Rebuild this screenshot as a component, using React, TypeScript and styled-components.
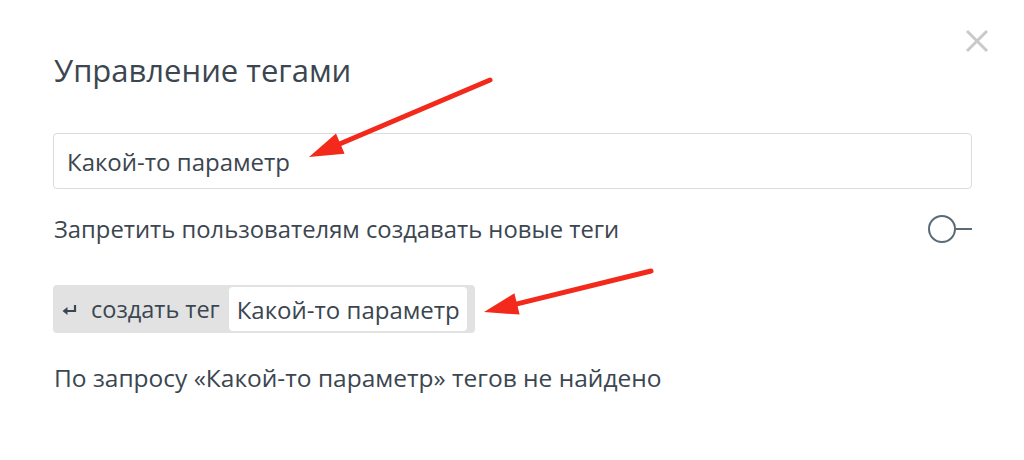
import React from "react";
import styled, { createGlobalStyle } from "styled-components";

const Global = createGlobalStyle`
  html, body { margin: 0; padding: 0; background: #fff; }
  body { font-family: "Open Sans", "Noto Sans", sans-serif; color: #3b4650; }
`;

const Modal = styled.div`
  position: relative;
  width: 1024px;
  height: 460px;
  box-sizing: border-box;
  padding: 48px 52px 0 53px;
  background: #fff;
  overflow: hidden;
`;

const Close = styled.button`
  position: absolute;
  top: 28px;
  right: 34px;
  width: 26px;
  height: 26px;
  border: none;
  background: transparent;
  padding: 0;
  cursor: pointer;
`;

const Title = styled.h2`
  margin: 0 0 0 1px;
  font-size: 31px;
  font-weight: 400;
  line-height: 44px;
  color: #3b4650;
`;

const Input = styled.input`
  display: block;
  width: 100%;
  box-sizing: border-box;
  height: 56px;
  margin-top: 41px;
  padding: 0 13px;
  border: 1px solid #dcdcdc;
  border-radius: 4px;
  font-family: inherit;
  font-size: 24px;
  color: #3b4650;
  outline: none;
`;

const Row = styled.div`
  display: flex;
  align-items: center;
  justify-content: space-between;
  margin-top: 22px;
  height: 36px;
`;

const Label = styled.span`
  font-size: 23.8px;
  color: #3b4650;
  padding-left: 1px;
`;

const Toggle = styled.div`
  display: flex;
  align-items: center;
`;

const Knob = styled.span`
  width: 28px;
  height: 28px;
  border: 2px solid #5b6b76;
  border-radius: 50%;
  box-sizing: border-box;
`;

const Tail = styled.span`
  width: 16px;
  height: 2px;
  background: #5b6b76;
`;

const Chip = styled.div`
  display: inline-flex;
  align-items: center;
  margin-top: 38px;
  height: 48px;
  padding: 2px 8px 2px 9px;
  box-sizing: border-box;
  background: #e2e2e2;
  border-radius: 4px;
`;

const ChipHint = styled.span`
  display: flex;
  align-items: center;
  gap: 14px;
  font-size: 23.5px;
  color: #3b4650;
  padding-right: 9px;
`;

const ChipValue = styled.span`
  display: flex;
  align-items: center;
  height: 44px;
  padding: 0 7px 0 8px;
  background: #fff;
  border-radius: 4px;
  font-size: 24px;
  color: #3b4650;
`;

const Empty = styled.p`
  margin: 28px 0 0 1px;
  font-size: 24.5px;
  color: #3b4650;
`;

const Overlay = styled.svg`
  position: absolute;
  left: 0;
  top: 0;
  pointer-events: none;
`;

const Arrow = ({ x1, y1, x2, y2 }: { x1: number; y1: number; x2: number; y2: number }) => {
  const a = Math.atan2(y2 - y1, x2 - x1);
  const len = 34;
  const w = 11;
  const bx = x2 - Math.cos(a) * len;
  const by = y2 - Math.sin(a) * len;
  const px = -Math.sin(a) * w;
  const py = Math.cos(a) * w;
  return (
    <g>
      <line x1={x1} y1={y1} x2={bx + Math.cos(a) * 4} y2={by + Math.sin(a) * 4} stroke="#f2291b" strokeWidth={5} strokeLinecap="round" />
      <polygon points={`${x2},${y2} ${bx + px},${by + py} ${bx - px},${by - py}`} fill="#f2291b" />
    </g>
  );
};

export default function App() {
  return (
    <>
      <Global />
      <Modal>
        <Close aria-label="close">
          <svg width="26" height="26" viewBox="0 0 26 26">
            <path d="M3 3 L23 23 M23 3 L3 23" stroke="#c9c9c9" strokeWidth="3" />
          </svg>
        </Close>
        <Title>Управление тегами</Title>
        <Input defaultValue="Какой-то параметр" />
        <Row>
          <Label>Запретить пользователям создавать новые теги</Label>
          <Toggle>
            <Knob />
            <Tail />
          </Toggle>
        </Row>
        <Chip>
          <ChipHint>
            <svg width="15" height="13" viewBox="0 0 15 13">
              <path d="M13 2 V8 H4" stroke="#3b4650" strokeWidth="2.2" fill="none" />
              <path d="M0.5 8 L5.5 4 V12 Z" fill="#3b4650" />
            </svg>
            создать тег
          </ChipHint>
          <ChipValue>Какой-то параметр</ChipValue>
        </Chip>
        <Empty>По запросу «Какой-то параметр» тегов не найдено</Empty>
        <Overlay width="1024" height="460">
          <Arrow x1={490} y1={80} x2={309} y2={157} />
          <Arrow x1={651} y1={271} x2={484} y2={312} />
        </Overlay>
      </Modal>
    </>
  );
}
